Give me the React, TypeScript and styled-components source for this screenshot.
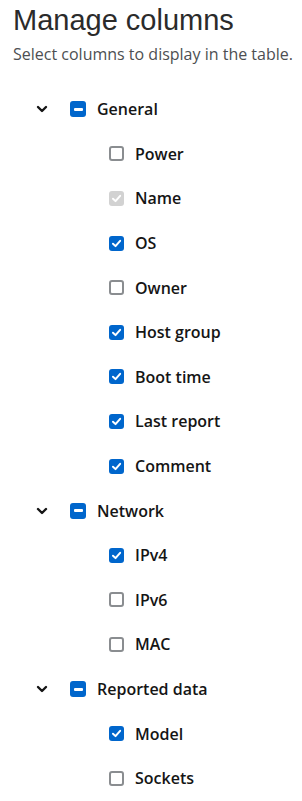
import * as React from 'react'
import styled, { createGlobalStyle } from 'styled-components'

type CheckState = 'checked' | 'unchecked' | 'indeterminate' | 'disabled'

interface IColumn {
    label: string
    state: CheckState
}

interface IGroup {
    label: string
    columns: IColumn[]
}

const groups: IGroup[] = [
    {
        label: 'General',
        columns: [
            { label: 'Power', state: 'unchecked' },
            { label: 'Name', state: 'disabled' },
            { label: 'OS', state: 'checked' },
            { label: 'Owner', state: 'unchecked' },
            { label: 'Host group', state: 'checked' },
            { label: 'Boot time', state: 'checked' },
            { label: 'Last report', state: 'checked' },
            { label: 'Comment', state: 'checked' }
        ]
    },
    {
        label: 'Network',
        columns: [
            { label: 'IPv4', state: 'checked' },
            { label: 'IPv6', state: 'unchecked' },
            { label: 'MAC', state: 'unchecked' }
        ]
    },
    {
        label: 'Reported data',
        columns: [
            { label: 'Model', state: 'checked' },
            { label: 'Sockets', state: 'unchecked' }
        ]
    }
]

const Global = createGlobalStyle`
    body {
        margin: 0;
        background: #fff;
        font-family: 'Open Sans', 'Liberation Sans', sans-serif;
        color: #151515;
    }
`

const Checkbox = ({ state, size }: { state: CheckState, size: number }) => (
    <Box state={state} size={size}>
        {(state === 'checked' || state === 'disabled') && (
            <svg width={size - 4} height={size - 4} viewBox='0 0 10 10'>
                <path d='M1.8 5.2 L4.1 7.4 L8.3 2.6' fill='none' stroke='#fff' strokeWidth='1.8' strokeLinecap='round' strokeLinejoin='round' />
            </svg>
        )}
        {state === 'indeterminate' && <Dash />}
    </Box>
)

const Chevron = () => (
    <svg width='12' height='8' viewBox='0 0 12 8'>
        <path d='M2 2 L6 6 L10 2' fill='none' stroke='#151515' strokeWidth='2.4' strokeLinecap='round' strokeLinejoin='round' />
    </svg>
)

export default class App extends React.Component {
    public render() {
        return (
            <Outer>
                <Global />
                <Title>Manage columns</Title>
                <Subtitle>Select columns to display in the table.</Subtitle>
                <List>
                    {groups.map(group => (
                        <React.Fragment key={group.label}>
                            <GroupRow>
                                <Toggle><Chevron /></Toggle>
                                <Checkbox state='indeterminate' size={16} />
                                <Label>{group.label}</Label>
                            </GroupRow>
                            {group.columns.map(col => (
                                <ColumnRow key={col.label}>
                                    <Checkbox state={col.state} size={15} />
                                    <Label>{col.label}</Label>
                                </ColumnRow>
                            ))}
                        </React.Fragment>
                    ))}
                </List>
            </Outer>
        )
    }
}

const Outer = styled.div`
    padding: 0 0 0 13px;
`

const Title = styled.h1`
    margin: 0;
    padding-top: 1px;
    font-family: 'Liberation Sans', Arial, sans-serif;
    font-size: 29px;
    font-weight: 400;
    line-height: 38px;
    color: #2b2b2b;
`

const Subtitle = styled.p`
    margin: 4px 0 0;
    font-size: 16px;
    line-height: 22px;
    color: #4d4f52;
`

const List = styled.div`
    display: grid;
    grid-auto-rows: 44.6px;
    margin-top: 22px;
`

const GroupRow = styled.div`
    display: flex;
    align-items: center;
    padding-left: 23px;
`

const ColumnRow = styled.div`
    display: flex;
    align-items: center;
    padding-left: 96px;
`

const Toggle = styled.span`
    display: flex;
    width: 34px;
    justify-content: flex-start;
`

const Box = styled.span<{ state: CheckState, size: number }>`
    display: inline-flex;
    align-items: center;
    justify-content: center;
    box-sizing: border-box;
    flex: none;
    width: ${props => props.size}px;
    height: ${props => props.size}px;
    margin-right: 11px;
    border-radius: 3px;
    background: ${props => props.state === 'checked' || props.state === 'indeterminate' ? '#0066cc' : props.state === 'disabled' ? '#d2d2d2' : '#fff'};
    border: ${props => props.state === 'unchecked' ? '2px solid #8a8d90' : 'none'};
`

const Dash = styled.span`
    width: 9px;
    height: 3px;
    border-radius: 1px;
    background: #fff;
`

const Label = styled.span`
    font-size: 16px;
    font-weight: 600;
    color: #151515;
`
